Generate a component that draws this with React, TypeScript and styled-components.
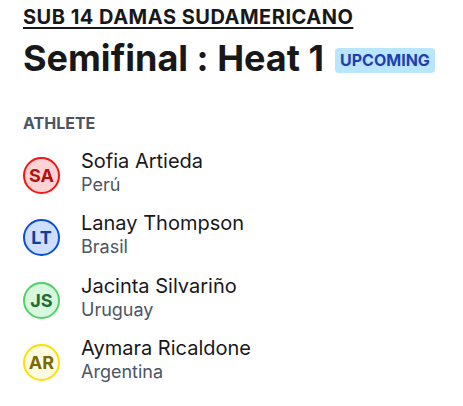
import React from "react";
import styled, { createGlobalStyle } from "styled-components";

const Global = createGlobalStyle`
  html, body { margin: 0; padding: 0; background: #ffffff; }
  body { font-family: Inter, "Noto Sans", sans-serif; color: #18181b; font-feature-settings: "calt" 0; }
`;

const Page = styled.div`
  padding: 3px 23px 16px 23px;
  display: flex;
  flex-direction: column;
`;

const EventTitle = styled.a`
  font-size: 20px;
  font-weight: 700;
  line-height: 28px;
  letter-spacing: 0.5px;
  text-decoration: underline;
  text-underline-offset: 3px;
  text-decoration-thickness: 2px;
  color: #18181b;
  align-self: flex-start;
`;

const HeadingRow = styled.div`
  display: flex;
  align-items: flex-start;
  gap: 11px;
  margin-top: 5px;
`;

const Heading = styled.h1`
  margin: 0;
  font-size: 36px;
  font-weight: 700;
  line-height: 44px;
  color: #18181b;
`;

const Badge = styled.span`
  background: #bae6fd;
  color: #1e40af;
  font-size: 16px;
  font-weight: 700;
  padding: 2px 5px;
  border-radius: 4px;
  line-height: 21px;
  margin-top: 12px;
`;

const SectionLabel = styled.div`
  margin-top: 33px;
  font-size: 16px;
  line-height: 20px;
  font-weight: 700;
  color: #4b5563;
`;

const List = styled.div`
  display: flex;
  flex-direction: column;
  gap: 14.5px;
  margin-top: 15.5px;
`;

const Row = styled.div`
  display: flex;
  align-items: flex-start;
  gap: 21px;
`;

const tones = {
  red: { bg: "#ffd3d3", border: "#f51414", fg: "#b40f0f" },
  blue: { bg: "#cddffc", border: "#0b4fd8", fg: "#0b3f9e" },
  green: { bg: "#d9f6de", border: "#4fd267", fg: "#1e6e31" },
  yellow: { bg: "#fffbe3", border: "#fbe007", fg: "#7a6a06" },
} as const;

type Tone = keyof typeof tones;

const Avatar = styled.div<{ $tone: Tone }>`
  width: 33px;
  height: 33px;
  margin-top: 8px;
  border-radius: 50%;
  box-sizing: content-box;
  border: 2px solid ${(p) => tones[p.$tone].border};
  background: ${(p) => tones[p.$tone].bg};
  color: ${(p) => tones[p.$tone].fg};
  display: flex;
  align-items: center;
  justify-content: center;
  font-size: 18px;
  font-weight: 700;
  flex-shrink: 0;
`;

const Info = styled.div`
  display: flex;
  flex-direction: column;
`;

const Name = styled.div`
  font-size: 20px;
  line-height: 24px;
  color: #18181b;
`;

const Country = styled.div`
  font-size: 18px;
  line-height: 24px;
  color: #4b5563;
`;

const athletes: { initials: string; name: string; country: string; tone: Tone }[] = [
  { initials: "SA", name: "Sofia Artieda", country: "Perú", tone: "red" },
  { initials: "LT", name: "Lanay Thompson", country: "Brasil", tone: "blue" },
  { initials: "JS", name: "Jacinta Silvariño", country: "Uruguay", tone: "green" },
  { initials: "AR", name: "Aymara Ricaldone", country: "Argentina", tone: "yellow" },
];

export default function App() {
  return (
    <>
      <Global />
      <Page>
        <EventTitle>SUB 14 DAMAS SUDAMERICANO</EventTitle>
        <HeadingRow>
          <Heading>Semifinal : Heat 1</Heading>
          <Badge>UPCOMING</Badge>
        </HeadingRow>
        <SectionLabel>ATHLETE</SectionLabel>
        <List>
          {athletes.map((a) => (
            <Row key={a.initials}>
              <Avatar $tone={a.tone}>{a.initials}</Avatar>
              <Info>
                <Name>{a.name}</Name>
                <Country>{a.country}</Country>
              </Info>
            </Row>
          ))}
        </List>
      </Page>
    </>
  );
}
